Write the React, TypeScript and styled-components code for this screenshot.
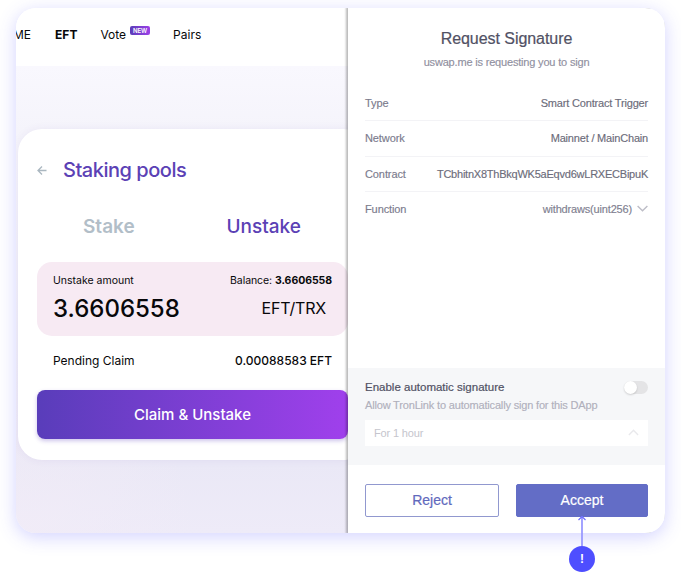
import React from "react";
import styled, { createGlobalStyle } from "styled-components";

const GlobalStyle = createGlobalStyle`
  * { box-sizing: border-box; }
  body { margin: 0; background: #fff; overflow: hidden; }
  button { font: inherit; border: 0; padding: 0; margin: 0; background: none; }
`;

const Page = styled.div`
  position: relative;
  width: 681px;
  height: 572px;
  padding: 8px 16px;
`;

const Frame = styled.main`
  display: flex;
  width: 649px;
  height: 525px;
  border-radius: 20px;
  overflow: hidden;
  background: #fff;
  box-shadow: 0 4px 18px rgba(78, 78, 255, 0.25);
`;

const Site = styled.section`
  display: flex;
  flex-direction: column;
  flex: none;
  width: 332px;
  overflow: hidden;
  font-family: Inter, sans-serif;
  color: #08080a;
`;

const Nav = styled.nav`
  display: flex;
  flex: none;
  align-items: center;
  height: 58px;
  padding-bottom: 5px;
  background: #fff;
  font-size: 12px;
`;

const NavItem = styled.span<{ $gap: number; $bold?: boolean }>`
  display: flex;
  white-space: nowrap;
  margin-left: ${(p) => p.$gap}px;
  font-weight: ${(p) => (p.$bold ? 700 : 400)};
`;

const NewBadge = styled.sup`
  display: flex;
  align-items: center;
  justify-content: center;
  width: 20px;
  height: 9px;
  margin: -1px 0 0 4px;
  border-radius: 2px;
  background: linear-gradient(90deg, #5a3db8, #9c40e8);
  color: #fff;
  font-size: 6px;
  font-weight: 600;
  line-height: 9px;
`;

const Backdrop = styled.div`
  flex: 1;
  padding: 63px 0 0 2px;
  background:
    radial-gradient(circle at 0 100%, rgba(242, 236, 247, 0.7), transparent 180px),
    linear-gradient(180deg, #f9f8fe 0%, #f5f4fb 14%, #eae8f6 85%, #eeebf8 100%);
`;

const Card = styled.div`
  width: 349px;
  height: 331px;
  padding: 0 19px;
  border-radius: 24px;
  background: #fff;
  box-shadow: 0 0 8px rgba(80, 60, 150, 0.07);
`;

const CardHeader = styled.header`
  display: flex;
  align-items: center;
  height: 81px;
`;

const CardTitle = styled.h1`
  margin: 0 0 0 16px;
  color: #5b41b5;
  font-size: 20px;
  font-weight: 500;
  letter-spacing: -0.48px;
`;

const Tabs = styled.div`
  display: flex;
  height: 52px;
  padding-top: 5px;
`;

const Tab = styled.button<{ $active?: boolean; $inset: number }>`
  flex: 1;
  height: 24px;
  padding-left: ${(p) => p.$inset}px;
  text-align: left;
  color: ${(p) => (p.$active ? "#5b41b5" : "#b2bec8")};
  font-size: 19px;
  line-height: 24px;
  font-weight: ${(p) => (p.$active ? 500 : 600)};
`;

const AmountBox = styled.div`
  height: 74px;
  padding: 11px 16px 0;
  border-radius: 15px;
  background: #f7eaf3;
`;

const Row = styled.div<{ $height: number; $size: number; $right?: number }>`
  display: flex;
  align-items: center;
  justify-content: space-between;
  height: ${(p) => p.$height}px;
  padding-right: ${(p) => p.$right ?? 0}px;
  font-size: ${(p) => p.$size}px;
  white-space: nowrap;
`;

const Amount = styled.span`
  font-size: 24px;
  font-weight: 500;
`;

const Balance = styled.span`
  letter-spacing: -0.06px;
`;

const Pair = styled.span`
  letter-spacing: -0.2px;
`;

const Pending = styled(Row)`
  padding: 0 16px 1px;
  strong { font-weight: 500; }
`;

const ClaimButton = styled.button`
  display: block;
  width: 100%;
  height: 49px;
  margin-top: 4px;
  border-radius: 8px;
  background: linear-gradient(90deg, #593dba, #a040ec);
  box-shadow: 0 2px 4px rgba(91, 61, 186, 0.3);
  color: #fff;
  font-size: 15px;
  font-weight: 500;
`;

const Wallet = styled.aside`
  z-index: 1;
  display: flex;
  flex-direction: column;
  flex: 1;
  background: #fff;
  box-shadow: -1px 0 2px 1px rgba(0, 0, 0, 0.27);
  font-family: "Liberation Sans", Arial, sans-serif;
  color: #666675;
`;

const WalletHeader = styled.header`
  height: 78px;
  padding-top: 21px;
  text-align: center;
`;

const WalletTitle = styled.h2`
  margin: 0;
  color: #515164;
  font-size: 16px;
  line-height: 20px;
  font-weight: 400;
  letter-spacing: -0.05px;
  -webkit-text-stroke: 0.2px currentColor;
`;

const WalletSubtitle = styled.p`
  margin: 6px 0 0;
  color: #9090a0;
  font-size: 11px;
  line-height: 14px;
  letter-spacing: -0.18px;
  -webkit-text-stroke: 0.15px currentColor;
`;

const Details = styled.dl`
  margin: 0;
  padding: 0 17px;
  height: 282px;
`;

const Detail = styled.div`
  display: flex;
  align-items: center;
  justify-content: space-between;
  height: 35.3px;
  font-size: 11px;
  letter-spacing: -0.1px;
  -webkit-text-stroke: 0.15px currentColor;
  border-bottom: 1px solid #f3f3f6;
  &:last-child { border-bottom: 0; height: 34px; }
  dt { color: #7b7b8d; }
`;

const Value = styled.dd<{ $spacing: number; $muted?: boolean }>`
  display: flex;
  align-items: center;
  margin: 0;
  white-space: nowrap;
  letter-spacing: ${(p) => p.$spacing}px;
  color: ${(p) => (p.$muted ? "#808090" : "#6c6c7a")};
  svg { margin-left: 5px; }
`;

const AutoSign = styled.section`
  height: 97px;
  padding: 11px 17px 0;
  background: #f6f7f9;
`;

const AutoTitle = styled.span`
  color: #515164;
  font-size: 11.5px;
  -webkit-text-stroke: 0.2px currentColor;
`;

const Switch = styled.span`
  display: flex;
  align-items: center;
  width: 24px;
  height: 13px;
  border-radius: 7px;
  background: #e4e4e6;
  &::before {
    content: "";
    width: 13px;
    height: 13px;
    border-radius: 50%;
    background: #fff;
    box-shadow: 0 1px 2px rgba(0, 0, 0, 0.16);
  }
`;

const AutoNote = styled.p`
  margin: 2px 0 7px;
  color: #b0b0bc;
  font-size: 11px;
  line-height: 16px;
  letter-spacing: -0.17px;
  -webkit-text-stroke: 0.15px currentColor;
`;

const Duration = styled.div`
  display: flex;
  align-items: center;
  justify-content: space-between;
  height: 26px;
  padding: 0 9px 1px;
  background: #fff;
  color: #c5c5cd;
  font-size: 11px;
  letter-spacing: -0.16px;
`;

const Actions = styled.footer`
  display: grid;
  grid-template-columns: 134px 132px;
  column-gap: 17px;
  padding: 19px 17px 0;
`;

const Action = styled.button<{ $primary?: boolean }>`
  height: 33px;
  padding-bottom: 2px;
  border: 1px solid ${(p) => (p.$primary ? "#636dc6" : "#9198cf")};
  border-radius: 2px;
  background: ${(p) => (p.$primary ? "#636dc6" : "#fff")};
  color: ${(p) => (p.$primary ? "#fff" : "#6169bd")};
  font-size: 14px;
  -webkit-text-stroke: 0.2px currentColor;
`;

const Callout = styled.div`
  position: absolute;
  z-index: 2;
  left: 569px;
  top: 515px;
  display: flex;
  flex-direction: column;
  align-items: center;
  width: 26px;
`;

const CalloutArrow = styled.svg`
  display: block;
  flex: none;
`;

const CalloutMark = styled.span`
  width: 26px;
  height: 26px;
  border-radius: 50%;
  background: #4e4eff;
  color: #fff;
  font: 700 12px/26px "Liberation Sans", Arial, sans-serif;
  text-align: center;
`;

const BackArrow = () => (
  <svg width="10" height="10" viewBox="0 0 10 10" fill="none" stroke="#aab7c0" strokeWidth="1.3">
    <path d="M9.5 5.5H1M5 1.5l-4 4 4 4" />
  </svg>
);

const Chevron = ({ up }: { up?: boolean }) => (
  <svg width="11" height="7" viewBox="0 0 11 7" fill="none" stroke={up ? "#e9e9ec" : "#bdbdc7"} strokeWidth="1.4">
    <path d={up ? "M.9 6 5.5 1.3 10.1 6" : "M.6 1l4.9 4.8L10.4 1"} />
  </svg>
);

export default function App() {
  return (
    <Page>
      <GlobalStyle />
      <Frame>
        <Site>
          <Nav>
            <NavItem $gap={-3}>ME</NavItem>
            <NavItem $gap={24} $bold>EFT</NavItem>
            <NavItem $gap={23}>
              Vote<NewBadge>NEW</NewBadge>
            </NavItem>
            <NavItem $gap={23}>Pairs</NavItem>
          </Nav>
          <Backdrop>
            <Card>
              <CardHeader>
                <BackArrow />
                <CardTitle>Staking pools</CardTitle>
              </CardHeader>
              <Tabs>
                <Tab $inset={46}>Stake</Tab>
                <Tab $inset={22} $active>Unstake</Tab>
              </Tabs>
              <AmountBox>
                <Row $height={14} $size={10.5}>
                  <span>Unstake amount</span>
                  <Balance>Balance: <strong>3.6606558</strong></Balance>
                </Row>
                <Row $height={42} $size={16} $right={6}>
                  <Amount>3.6606558</Amount>
                  <Pair>EFT/TRX</Pair>
                </Row>
              </AmountBox>
              <Pending $height={50} $size={12}>
                <span>Pending Claim</span>
                <strong>0.00088583 EFT</strong>
              </Pending>
              <ClaimButton>Claim &amp; Unstake</ClaimButton>
            </Card>
          </Backdrop>
        </Site>
        <Wallet>
          <WalletHeader>
            <WalletTitle>Request Signature</WalletTitle>
            <WalletSubtitle>uswap.me is requesting you to sign</WalletSubtitle>
          </WalletHeader>
          <Details>
            <Detail><dt>Type</dt><Value $spacing={-0.18}>Smart Contract Trigger</Value></Detail>
            <Detail><dt>Network</dt><Value $spacing={-0.19}>Mainnet / MainChain</Value></Detail>
            <Detail><dt>Contract</dt><Value $spacing={-0.23}>TCbhitnX8ThBkqWK5aEqvd6wLRXECBipuK</Value></Detail>
            <Detail><dt>Function</dt><Value $spacing={-0.17} $muted>withdraws(uint256)<Chevron /></Value></Detail>
          </Details>
          <AutoSign>
            <Row $height={16} $size={11}>
              <AutoTitle>Enable automatic signature</AutoTitle>
              <Switch />
            </Row>
            <AutoNote>Allow TronLink to automatically sign for this DApp</AutoNote>
            <Duration>For 1 hour<Chevron up /></Duration>
          </AutoSign>
          <Actions>
            <Action>Reject</Action>
            <Action $primary>Accept</Action>
          </Actions>
        </Wallet>
      </Frame>
      <Callout>
        <CalloutArrow width="10" height="31" viewBox="0 0 10 31" fill="none" stroke="#9a9aff">
          <path d="M5 1.5V31" strokeWidth="1.8" />
          <path d="M1.5 5 5 1.5 8.5 5" stroke="#6c6cff" strokeWidth="1.2" />
        </CalloutArrow>
        <CalloutMark>!</CalloutMark>
      </Callout>
    </Page>
  );
}
